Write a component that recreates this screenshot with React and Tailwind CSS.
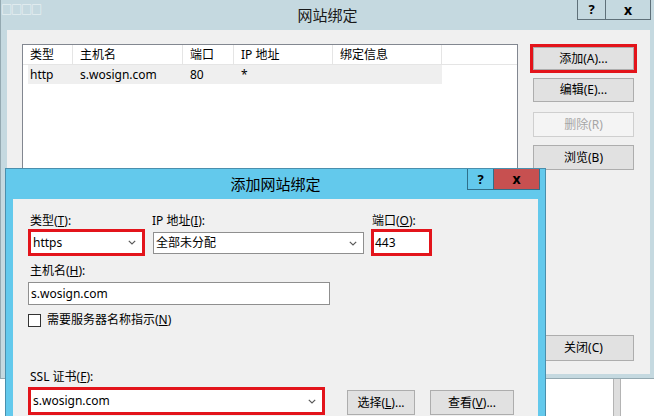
import React from 'react';

const Chevron = () => (
  <svg width="8" height="5" viewBox="0 0 8 5" className="shrink-0">
    <path d="M0.8 0.8 L4 4 L7.2 0.8" fill="none" stroke="#5a5a5a" strokeWidth="1.2" />
  </svg>
);

const Btn = ({ children, disabled, className = '' }) => (
  <div
    className={`flex items-center justify-center border text-[12px] leading-none ${
      disabled ? 'bg-[#f4f4f4] border-[#cfcfcf] text-[#a6a6a6]' : 'bg-[#e1e1e1] border-[#adadad] text-black'
    } ${className}`}
  >
    {children}
  </div>
);

const Combo = ({ value, className = '' }) => (
  <div className={`flex items-center justify-between bg-white pl-[2px] pr-[6px] text-[12px] ${className}`}>
    <span>{value}</span>
    <Chevron />
  </div>
);

const headers = [
  { label: '类型', w: 'w-[50px]' },
  { label: '主机名', w: 'w-[110px]' },
  { label: '端口', w: 'w-[51px]' },
  { label: 'IP 地址', w: 'w-[99px]' },
  { label: '绑定信息', w: 'w-[109px]' },
];

export default function App() {
  return (
    <div className="relative w-[654px] h-[416px] overflow-hidden bg-white text-black font-['Noto_Sans','Noto_Sans_CJK_SC',sans-serif]">
      {/* 网站绑定 window */}
      <div className="h-[379px] bg-[#c5d9e0] flex flex-col border-l border-b border-[#94a9b1]">
        <div className="h-[30px] grid grid-cols-[1fr_auto_1fr] shrink-0">
          <div className="text-[11px] leading-none pt-[4px] text-white/80 tracking-[-1px]">□□□□</div>
          <div className="text-[15px] leading-[20px] pt-[5px] text-[#1a1a1a]">网站绑定</div>
          <div className="flex justify-end items-start pr-[3px]">
            <div className="flex h-[20px] border border-t-0 border-[#5f7079]">
              <div className="w-[28px] flex items-center justify-center border-r border-[#5f7079] text-[13px] font-bold leading-none">?</div>
              <div className="w-[44px] flex items-center justify-center text-[14px] font-bold leading-none">x</div>
            </div>
          </div>
        </div>

        <div className="flex-1 ml-[6px] mr-[4px] mb-[4px] bg-[#f0f0f0] flex pt-[14px] pl-[15px]">
          {/* list view */}
          <div className="w-[496px] h-[300px] bg-white border border-[#828790] text-[12px]">
            <div className="flex h-[20px] border-b border-[#e5e5e5]">
              {headers.map((h) => (
                <div key={h.label} className={`${h.w} h-full border-r border-[#e5e5e5] pl-[7px] leading-[19px]`}>
                  {h.label}
                </div>
              ))}
            </div>
            <div className="flex ml-[5px] w-[414px] h-[19px] bg-[#efefef] leading-[19px]">
              <div className="w-[45px] pl-[2px]">http</div>
              <div className="w-[110px] pl-[7px]">s.wosign.com</div>
              <div className="w-[51px] pl-[7px]">80</div>
              <div className="w-[99px] pl-[7px]">*</div>
              <div className="w-[109px]" />
            </div>
          </div>

          {/* buttons */}
          <div className="ml-[15px] w-[101px] flex flex-col">
            <div className="-mx-[3px] border-[3px] border-[#e3141b]">
              <Btn className="h-[23px]">添加(A)...</Btn>
            </div>
            <Btn className="h-[24px] mt-[5px]">编辑(E)...</Btn>
            <Btn disabled className="h-[25px] mt-[10px]">删除(R)</Btn>
            <Btn className="h-[25px] mt-[8px]">浏览(B)</Btn>
            <Btn className="h-[26px] mt-auto mb-[13px]">关闭(C)</Btn>
          </div>
        </div>
      </div>

      {/* desktop below */}
      <div className="h-[37px] flex">
        <div className="ml-[613px] w-[8px] h-full bg-[#dedede] border-x border-[#b4b4b4]" />
      </div>

      {/* 添加网站绑定 dialog */}
      <div className="absolute left-[5px] top-[168px] w-[541px] h-[260px] bg-[#63c9ec] border border-[#4a8fad] flex flex-col">
        <div className="h-[30px] grid grid-cols-[1fr_auto_1fr] shrink-0">
          <div />
          <div className="text-[15px] leading-[20px] pt-[5px]">添加网站绑定</div>
          <div className="flex justify-end items-start pr-[5px]">
            <div className="flex h-[21px] border border-t-0 border-[#2f6f8a]">
              <div className="w-[26px] flex items-center justify-center border-r border-[#2f6f8a] text-[13px] font-bold leading-none">?</div>
              <div className="w-[45px] flex items-center justify-center bg-[#c75050] text-[14px] font-bold leading-none">x</div>
            </div>
          </div>
        </div>

        <div className="flex-1 mx-[7px] bg-[#f0f0f0] text-[12px] pl-[15px]">
          <div className="flex pt-[14px]">
            <div className="w-[117px] flex flex-col">
              <div className="leading-[16px] pl-[2px]">类型(<u>T</u>):</div>
              <div className="border-[3px] border-[#e3141b]">
                <Combo value="https" className="h-[21px]" />
              </div>
            </div>
            <div className="ml-[8px] w-[211px] flex flex-col">
              <div className="leading-[16px] -ml-[1px]">IP 地址(<u>I</u>):</div>
              <Combo value="全部未分配" className="h-[22px] mt-[3px] border border-[#8f8f8f]" />
            </div>
            <div className="ml-[7px] w-[61px] flex flex-col">
              <div className="leading-[16px] pl-[1px]">端口(<u>O</u>):</div>
              <div className="border-[3px] border-[#e3141b] h-[27px] bg-white pl-[1px] leading-[21px]">443</div>
            </div>
          </div>

          <div className="mt-[7px] leading-[16px] pl-[2px]">主机名(<u>H</u>):</div>
          <div className="mt-[3px] w-[302px] h-[23px] bg-white border border-[#8f8f8f] pl-[2px] leading-[21px]">s.wosign.com</div>

          <div className="mt-[7px] h-[16px] flex items-center">
            <div className="w-[13px] h-[13px] bg-white border border-[#333]" />
            <div className="ml-[6px] leading-[16px]">需要服务器名称指示(<u>N</u>)</div>
          </div>

          <div className="mt-[41px] leading-[16px] pl-[2px]">SSL 证书(<u>F</u>):</div>
          <div className="mt-[2px] flex items-start">
            <div className="w-[297px] border-[3px] border-[#e3141b]">
              <Combo value="s.wosign.com" className="h-[22px]" />
            </div>
            <Btn className="ml-[22px] mt-[3px] w-[68px] h-[25px]">选择(<u>L</u>)...</Btn>
            <Btn className="ml-[15px] mt-[3px] w-[84px] h-[25px]">查看(<u>V</u>)...</Btn>
          </div>
        </div>
      </div>
    </div>
  );
}
